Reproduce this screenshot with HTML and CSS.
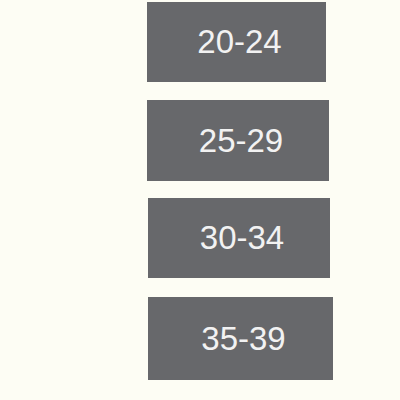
FILE: index.html
```html
<!DOCTYPE html>
<html lang="en">
<head>
    <meta charset="UTF-8">
    <meta name="viewport" content="width=device-width, initial-scale=1.0">
    <title>Age groups</title>
    <link rel="stylesheet" href="styles.css">
</head>
<body>
    <div class="ranges">
        <div class="range r1">20-24</div>
        <div class="range r2">25-29</div>
        <div class="range r3">30-34</div>
        <div class="range r4">35-39</div>
    </div>
</body>
</html>
```

FILE: styles.css
```css
body {
    margin: 0;
    background-color: #fdfdf4;
    font-family: "Liberation Sans", Arial, sans-serif;
}
.ranges {
    display: flex;
    flex-direction: column;
    align-items: flex-start;
    padding-top: 2px;
    padding-left: 147px;
}
.range {
    display: flex;
    justify-content: center;
    align-items: center;
    box-sizing: border-box;
    padding-left: 6px;
    background: #67686b;
    color: #f2f2f2;
    font-size: 33px;
}
.r1 {
    width: 179px;
    height: 80px;
}
.r2 {
    width: 182px;
    height: 81px;
    margin-top: 18px;
}
.r3 {
    width: 182px;
    height: 80px;
    margin-top: 17px;
    margin-left: 1px;
}
.r4 {
    width: 185px;
    height: 83px;
    margin-top: 19px;
    margin-left: 1px;
}
```
